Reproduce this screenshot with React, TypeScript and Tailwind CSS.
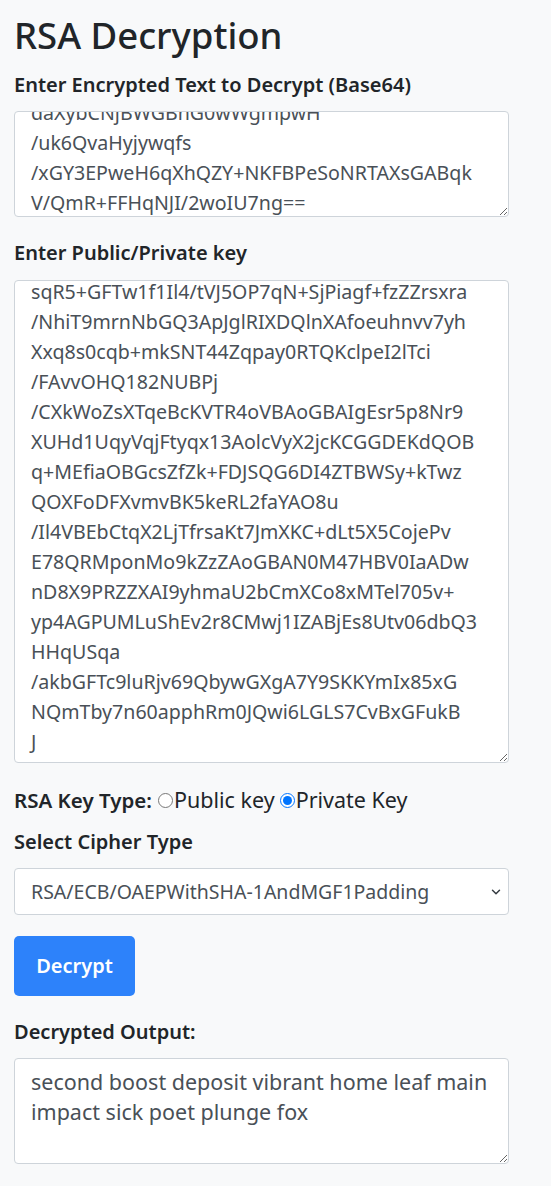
import { useEffect, useRef } from "react"
import { ChevronDown } from "lucide-react"

const encrypted = [
  "QJ3mXr0hYbLw8Tq2kVn5sPz7cDfGuA",
  "bH4tK9eWmR2yNc6LpXo1ZsVq8jFgEd",
  "daXybCNjBWGBnG0wWgmpwH",
  "/uk6QvaHyjywqfs",
  "/xGY3EPweH6qXhQZY+NKFBPeSoNRTAXsGABqk",
  "V/QmR+FFHqNJI/2woIU7ng==",
].join("\n")

const privateKey = [
  "-----BEGIN PRIVATE KEY-----",
  "sqR5+GFTw1f1Il4/tVJ5OP7qN+SjPiagf+fzZZrsxra",
  "/NhiT9mrnNbGQ3ApJglRIXDQlnXAfoeuhnvv7yh",
  "Xxq8s0cqb+mkSNT44Zqpay0RTQKclpeI2lTci",
  "/FAvvOHQ182NUBPj",
  "/CXkWoZsXTqeBcKVTR4oVBAoGBAIgEsr5p8Nr9",
  "XUHd1UqyVqjFtyqx13AolcVyX2jcKCGGDEKdQOB",
  "q+MEfiaOBGcsZfZk+FDJSQG6DI4ZTBWSy+kTwz",
  "QOXFoDFXvmvBK5keRL2faYAO8u",
  "/Il4VBEbCtqX2LjTfrsaKt7JmXKC+dLt5X5CojePv",
  "E78QRMponMo9kZzZAoGBAN0M47HBV0IaADw",
  "nD8X9PRZZXAI9yhmaU2bCmXCo8xMTel705v+",
  "yp4AGPUMLuShEv2r8CMwj1IZABjEs8Utv06dbQ3",
  "HHqUSqa",
  "/akbGFTc9luRjv69QbywGXgA7Y9SKKYmIx85xG",
  "NQmTby7n60apphRm0JQwi6LGLS7CvBxGFukB",
  "J",
  "-----END PRIVATE KEY-----",
].join("\n")

const output = "second boost deposit vibrant home leaf main impact sick poet plunge fox"

const field =
  "block w-[495px] resize rounded border border-[#ced4da] bg-white px-4 py-2 leading-[30px] text-[#495057] overflow-hidden outline-none"

const label = "block text-[20px] font-semibold leading-[30px]"

export default function App() {
  const encRef = useRef<HTMLTextAreaElement>(null)
  const keyRef = useRef<HTMLTextAreaElement>(null)

  useEffect(() => {
    if (encRef.current) encRef.current.scrollTop = 82
    if (keyRef.current) keyRef.current.scrollTop = 42
  }, [])

  return (
    <div className="min-h-screen bg-[#f8f9fa] px-[14px] pt-[13px] pb-6 font-['Noto_Sans',sans-serif] text-[#212529]">
      <h1 className="text-[36.5px] font-medium leading-[44px]">RSA Decryption</h1>

      <label className={`${label} mt-[13px] text-[20.5px]`}>Enter Encrypted Text to Decrypt (Base64)</label>
      <textarea
        ref={encRef}
        readOnly
        value={encrypted}
        className={`${field} mt-[11px] h-[106px] text-[19.6px]`}
      />

      <label className={`${label} mt-[21px]`}>Enter Public/Private key</label>
      <textarea
        ref={keyRef}
        readOnly
        value={privateKey}
        className={`${field} mt-[12px] h-[483px] text-[19.6px]`}
      />

      <div className="mt-[22px] flex items-center text-[21.5px] leading-[30px]">
        <span className="mr-[6px] text-[20.5px] font-semibold">RSA Key Type:</span>
        <label className="flex items-center">
          <input type="radio" name="keyType" className="m-0 mr-px h-[15px] w-[15px]" />
          Public key
        </label>
        <label className="ml-[5px] flex items-center">
          <input type="radio" name="keyType" defaultChecked className="m-0 mr-px h-[15px] w-[15px]" />
          Private Key
        </label>
      </div>

      <label className={`${label} mt-[12px]`}>Select Cipher Type</label>
      <div className="relative mt-[11px] w-[495px]">
        <select className="block h-[47px] w-full appearance-none rounded border border-[#ced4da] bg-white px-4 text-[19.5px] text-[#495057] outline-none">
          <option>RSA/ECB/OAEPWithSHA-1AndMGF1Padding</option>
          <option>RSA/ECB/PKCS1Padding</option>
        </select>
        <ChevronDown
          className="pointer-events-none absolute right-[6px] top-1/2 h-[14px] w-[14px] -translate-y-1/2 text-[#343a40]"
          strokeWidth={2.5}
        />
      </div>

      <button className="mt-[21px] flex h-[60px] w-[121px] items-center justify-center rounded-[5px] bg-[#2d82fa] text-[20px] font-semibold text-white">
        Decrypt
      </button>

      <label className={`${label} mt-[21px]`}>Decrypted Output:</label>
      <textarea readOnly value={output} className={`${field} mt-[11px] h-[106px] text-[21.5px]`} />
    </div>
  )
}
